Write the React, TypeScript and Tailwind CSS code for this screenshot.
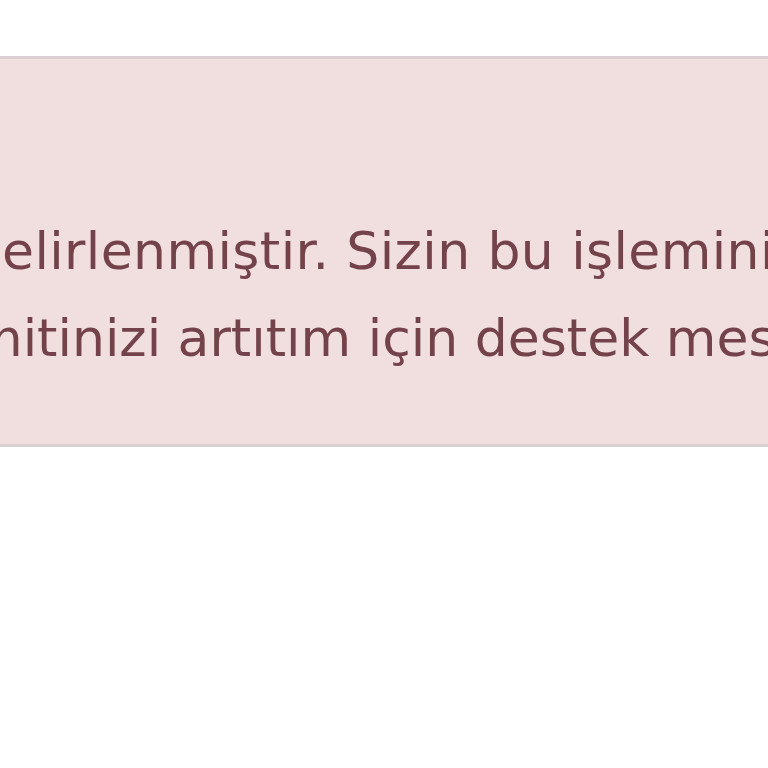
export default function App() {
  return (
    <div className="bg-white w-[768px] h-[768px] overflow-hidden pt-[56px]">
      <div
        className="bg-[#f1dedf] border-y-[3px] border-[#dccfd1] pt-[149px] pb-[62px] overflow-hidden text-[#74424a] text-[52px] leading-[87px]"
        style={{ fontFamily: '"DejaVu Sans", sans-serif' }}
      >
        <div className="whitespace-nowrap ml-[2px] tracking-[0.4px]">elirlenmiştir. Sizin bu işleminizi</div>
        <div className="whitespace-nowrap ml-[-28px]">mitinizi artıtım için destek mesajı</div>
      </div>
    </div>
  );
}
